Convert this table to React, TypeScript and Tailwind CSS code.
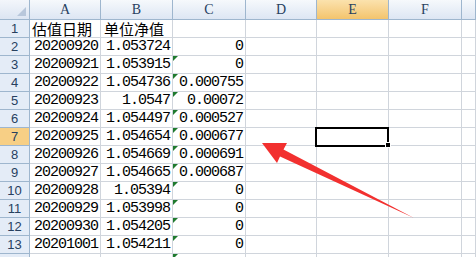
import React from 'react';

interface Row {
  date: string;
  nav: string;
  diff: string;
  flagged: boolean;
}

const rows: Row[] = [
  { date: '20200920', nav: '1.053724', diff: '0', flagged: false },
  { date: '20200921', nav: '1.053915', diff: '0', flagged: true },
  { date: '20200922', nav: '1.054736', diff: '0.000755', flagged: true },
  { date: '20200923', nav: '1.0547', diff: '0.00072', flagged: true },
  { date: '20200924', nav: '1.054497', diff: '0.000527', flagged: true },
  { date: '20200925', nav: '1.054654', diff: '0.000677', flagged: true },
  { date: '20200926', nav: '1.054669', diff: '0.000691', flagged: true },
  { date: '20200927', nav: '1.054665', diff: '0.000687', flagged: true },
  { date: '20200928', nav: '1.05394', diff: '0', flagged: true },
  { date: '20200929', nav: '1.053998', diff: '0', flagged: true },
  { date: '20200930', nav: '1.054205', diff: '0', flagged: true },
  { date: '20201001', nav: '1.054211', diff: '0', flagged: true },
  { date: '', nav: '', diff: '', flagged: true },
];

const columns = ['A', 'B', 'C', 'D', 'E', 'F', ''];
const SELECTED_ROW = 7;
const SELECTED_COL = 'E';

const cell = 'relative box-border border-r border-b border-[#d0d5dc] bg-white';
const num = "flex items-end justify-end pr-[2px] font-['Liberation_Mono',monospace] text-[15px] leading-[16px] tracking-[-1px] text-black";
const cjk = "flex items-end font-['Noto_Sans_CJK_SC',sans-serif] text-[15px] leading-[17px] text-black";
const rowHead = "box-border flex items-center justify-center border-r border-b border-[#9eb6ce] font-['Liberation_Sans',sans-serif] text-[13px] text-[#27405f]";

function Flag() {
  return (
    <span className="absolute left-0 top-0 h-0 w-0 border-r-[5px] border-t-[5px] border-r-transparent border-t-[#1f7a2e]" />
  );
}

export default function App() {
  return (
    <div className="relative h-[257px] w-[476px] overflow-hidden bg-white">
      <div className="grid grid-cols-[30px_71px_72px_73px_71px_72px_73px_1fr] grid-rows-[20px_repeat(14,18px)]">
        {/* corner */}
        <div className="relative box-border border-r border-b border-[#9eb6ce] bg-gradient-to-b from-[#f3f6fb] to-[#dce5f2]">
          <span className="absolute bottom-[3px] right-[3px] h-0 w-0 border-b-[9px] border-l-[9px] border-b-[#b8c7db] border-l-transparent" />
        </div>
        {columns.map((c, i) => (
          <div
            key={i}
            className={`box-border flex items-center justify-center border-r border-b border-[#9eb6ce] font-['Liberation_Serif',serif] text-[14px] text-[#27405f] ${
              c === SELECTED_COL
                ? 'bg-gradient-to-b from-[#fbe2ad] to-[#f3c46c]'
                : 'bg-gradient-to-b from-[#f6f9fc] to-[#dde6f3]'
            }`}
          >
            {c}
          </div>
        ))}

        {/* header row 1 */}
        <div className={`${rowHead} bg-[#e4ecf7]`}>1</div>
        <div className={`${cell} ${cjk} pl-[2px]`}>估值日期</div>
        <div className={`${cell} ${cjk} pl-[3px]`}>单位净值</div>
        {[0, 1, 2, 3, 4].map(k => (
          <div key={k} className={cell} />
        ))}

        {rows.map((r, i) => {
          const n = i + 2;
          const blank = r.date === '';
          return (
            <React.Fragment key={n}>
              <div className={`${rowHead} ${n === SELECTED_ROW ? 'bg-[#f7cf85]' : 'bg-[#e4ecf7]'}`}>{blank ? '' : n}</div>
              <div className={`${cell} ${num}`}>{r.date}</div>
              <div className={`${cell} ${num}`}>{r.nav}</div>
              <div className={`${cell} ${num}`}>
                {r.flagged && <Flag />}
                {r.diff}
              </div>
              <div className={cell} />
              <div className={cell}>
                {n === SELECTED_ROW && (
                  <>
                    <span className="absolute -left-[2px] -top-[1px] z-10 box-border h-[20px] w-[74px] border-2 border-black" />
                    <span className="absolute -bottom-[3px] -right-[3px] z-10 box-border h-[6px] w-[6px] border border-white bg-black" />
                  </>
                )}
              </div>
              <div className={cell} />
              <div className={cell} />
            </React.Fragment>
          );
        })}
      </div>

      {/* red pointer arrow */}
      <svg className="absolute left-0 top-0" width="476" height="257" viewBox="0 0 476 257">
        <polygon
          points="262,143 287,143 283.5,149.5 414,218 280,156.5 277,163"
          fill="#f2302f"
        />
      </svg>
    </div>
  );
}
